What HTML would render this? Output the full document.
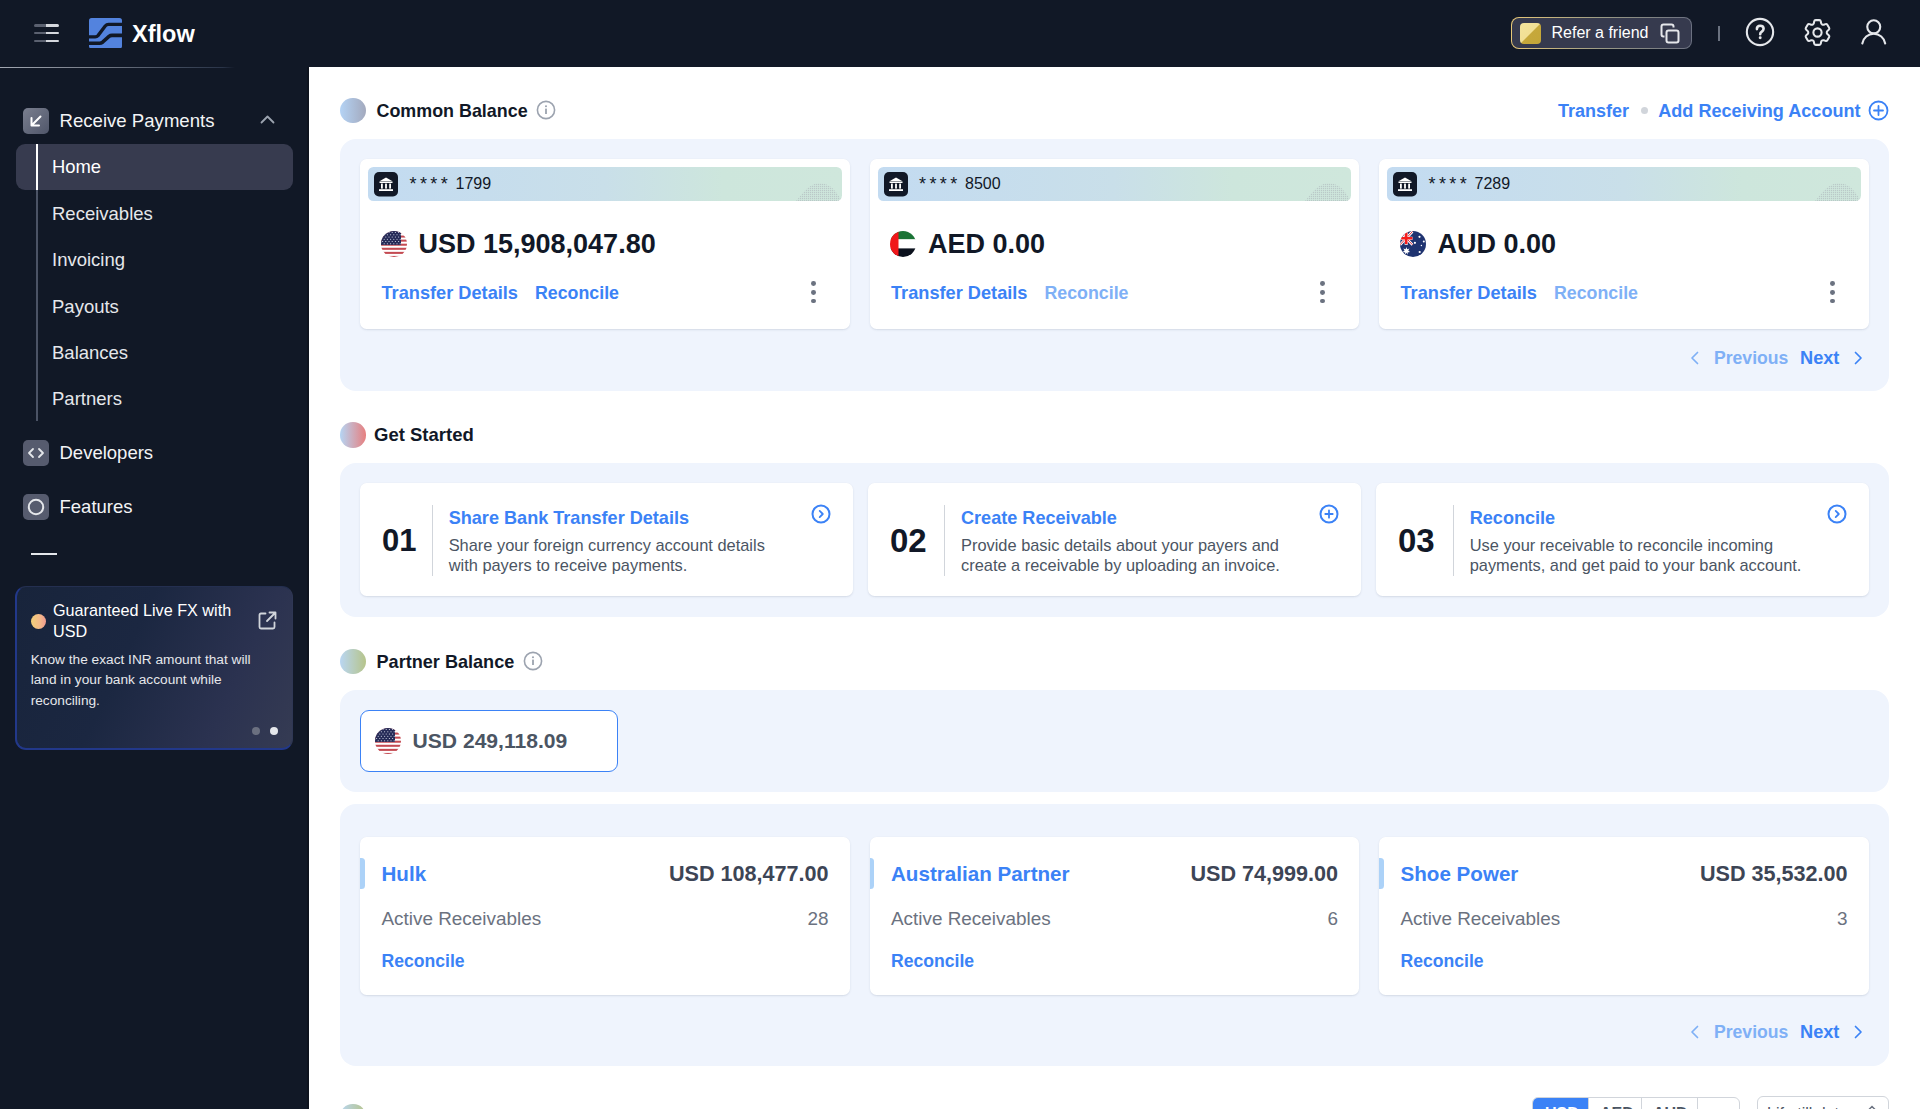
<!DOCTYPE html><html><head><meta charset="utf-8"><style>
html,body{margin:0;padding:0;width:1920px;height:1109px;overflow:hidden;background:#fff;font-family:"Liberation Sans",sans-serif;}
.a{position:absolute;}
.t{position:absolute;line-height:1;white-space:nowrap;}
</style></head><body>
<div class="a" style="left:0px;top:0px;width:1920px;height:67px;background:#111826"></div>
<div class="a" style="left:0px;top:67px;width:309px;height:1042px;background:#111826"></div>
<div class="a" style="left:0px;top:66.6px;width:309px;height:1.2px;background:linear-gradient(90deg,#a3a8b2 0%,#6e7480 35%,#3c4658 60%,#2a3448 72%,rgba(17,24,38,0) 76%)"></div>
<div class="a" style="left:306.8px;top:67px;width:2.2px;height:1042px;background:#0e131e"></div>
<div class="a" style="left:33.5px;top:24.1px;width:25.5px;height:2.5px;border-radius:2px;background:linear-gradient(90deg,#5b6170 0%,#5b6170 48%,#d5d8de 50%,#d5d8de 100%)"></div>
<div class="a" style="left:33.5px;top:31.9px;width:25.5px;height:2.5px;border-radius:2px;background:linear-gradient(90deg,#5b6170 0%,#5b6170 48%,#d5d8de 50%,#d5d8de 100%)"></div>
<div class="a" style="left:33.5px;top:39.6px;width:25.5px;height:2.5px;border-radius:2px;background:linear-gradient(90deg,#5b6170 0%,#5b6170 48%,#d5d8de 50%,#d5d8de 100%)"></div>
<svg class="a" style="left:89.45px;top:17.8px" width="33" height="30.6" viewBox="0 0 33 30.6"><rect x="0" y="0" width="33" height="30.6" rx="2.6" fill="#5383de"/>
<path d="M-1 18.85 L6.2 18.85 C7.4 18.85 8.2 18.5 9 17.6 L16.2 8 C17.2 6.8 18 6.3 19.6 6.3 L34 6.3" stroke="#111826" stroke-width="3.3" fill="none"/>
<path d="M-1 25.2 L10.6 25.2 C11.8 25.2 12.6 24.9 13.6 24.2 L20 18.4 C20.9 17.7 21.6 17.4 23 17.4 L34 17.4" stroke="#111826" stroke-width="3.6" fill="none"/></svg>
<div class="t " style="left:132px;top:22.71px;font-size:23.5px;color:#ffffff;font-weight:700;">Xflow</div>
<div class="a" style="left:1511px;top:17px;width:181px;height:32px;border-radius:8px;padding:1px;box-sizing:border-box;background:linear-gradient(90deg,#e8c877 0%,#9a9a86 50%,#6b7080 100%)"><div style="width:100%;height:100%;border-radius:7px;background:#363a4e"></div></div>
<div class="a" style="left:1520px;top:22.5px;width:21px;height:21px;border-radius:4px;background:linear-gradient(135deg,#f4e49c 0%,#f1df94 49.5%,#c6a83b 50.5%,#c4a638 100%)"></div>
<div class="t " style="left:1551.5px;top:25.46px;font-size:16px;color:#ffffff;font-weight:400;">Refer a friend</div>
<svg class="a" style="left:1660px;top:23px" width="21" height="21" viewBox="0 0 21 21"><rect x="6.5" y="7.5" width="12" height="12" rx="2" fill="none" stroke="#e5e7eb" stroke-width="2"/>
<path d="M13.5 4.5 L13.5 3.5 C13.5 2.4 12.6 1.5 11.5 1.5 L3.5 1.5 C2.4 1.5 1.5 2.4 1.5 3.5 L1.5 11.5 C1.5 12.6 2.4 13.5 3.5 13.5 L4.5 13.5" fill="none" stroke="#e5e7eb" stroke-width="2"/></svg>
<div class="a" style="left:1718px;top:26px;width:1.5px;height:14.5px;background:#6b7280"></div>
<svg class="a" style="left:1744.4px;top:16px" width="32" height="32" viewBox="0 0 32 32"><circle cx="16" cy="16" r="13.15" fill="none" stroke="#e5e7eb" stroke-width="2.1"/>
<path d="M12.9 13.1 C12.9 10.9 14.3 9.8 16.2 9.8 C18.3 9.8 19.6 11.1 19.6 12.8 C19.6 14.4 18.6 15.1 17.5 15.9 C16.6 16.5 16.2 17.1 16.2 18.3" fill="none" stroke="#e5e7eb" stroke-width="2.6" stroke-linecap="round"/>
<circle cx="16.2" cy="21.7" r="1.45" fill="#e5e7eb"/></svg>
<svg class="a" style="left:1800.6px;top:15.7px" width="33" height="33" viewBox="0 0 24 24"><g fill="none" stroke="#e5e7eb" stroke-width="1.5" stroke-linecap="round" stroke-linejoin="round"><path d="M9.594 3.94c.09-.542.56-.94 1.11-.94h2.593c.55 0 1.02.398 1.11.94l.213 1.281c.063.374.313.686.645.87.074.04.147.083.22.127.325.196.72.257 1.075.124l1.217-.456a1.125 1.125 0 0 1 1.37.49l1.296 2.247a1.125 1.125 0 0 1-.26 1.431l-1.003.827c-.293.241-.438.613-.43.992a7.723 7.723 0 0 1 0 .255c-.008.378.137.75.43.991l1.004.827c.424.35.534.955.26 1.43l-1.298 2.247a1.125 1.125 0 0 1-1.369.491l-1.217-.456c-.355-.133-.75-.072-1.076.124a6.47 6.47 0 0 1-.22.128c-.331.183-.581.495-.644.869l-.213 1.281c-.09.543-.56.94-1.11.94h-2.594c-.55 0-1.019-.398-1.11-.94l-.213-1.281c-.062-.374-.312-.686-.644-.87a6.52 6.52 0 0 1-.22-.127c-.325-.196-.72-.257-1.076-.124l-1.217.456a1.125 1.125 0 0 1-1.369-.49l-1.297-2.247a1.125 1.125 0 0 1 .26-1.431l1.004-.827c.292-.24.437-.613.43-.991a6.932 6.932 0 0 1 0-.255c.007-.38-.138-.751-.43-.992l-1.004-.827a1.125 1.125 0 0 1-.26-1.43l1.297-2.247a1.125 1.125 0 0 1 1.37-.491l1.216.456c.356.133.751.072 1.076-.124.072-.044.146-.086.22-.128.332-.183.582-.495.644-.869l.214-1.28Z"/><path d="M15 12a3 3 0 1 1-6 0 3 3 0 0 1 6 0Z"/></g></svg>
<svg class="a" style="left:1859px;top:14px" width="30" height="34" viewBox="0 0 30 34"><circle cx="14.75" cy="12.8" r="6.5" fill="none" stroke="#e5e7eb" stroke-width="2.1"/>
<path d="M3.3 29.5 A11.6 11.6 0 0 1 26.2 29.5" fill="none" stroke="#e5e7eb" stroke-width="2.1" stroke-linecap="round"/></svg>
<div class="a" style="left:23px;top:108px;width:26px;height:26px;border-radius:5px;background:linear-gradient(135deg,#7a7f8f 0%,#50566a 100%)"></div>
<svg class="a" style="left:23px;top:108px" width="26" height="26" viewBox="0 0 26 26"><path d="M17.5 8.5 L8.5 17.5 M8.5 10 L8.5 17.5 L16 17.5" fill="none" stroke="#ffffff" stroke-width="2" stroke-linecap="round" stroke-linejoin="round"/></svg>
<div class="t " style="left:59.5px;top:111.76px;font-size:18.6px;color:#f3f4f6;font-weight:400;">Receive Payments</div>
<svg class="a" style="left:259px;top:113px" width="17" height="12" viewBox="0 0 17 12"><path d="M2.5 9.5 L8.5 3.5 L14.5 9.5" fill="none" stroke="#9ca3af" stroke-width="1.8" stroke-linecap="round" stroke-linejoin="round"/></svg>
<div class="a" style="left:16px;top:144px;width:277px;height:45.5px;background:#373b4f;border-radius:9px"></div>
<div class="a" style="left:35.5px;top:144px;width:2px;height:277px;background:#4b5365"></div>
<div class="a" style="left:35.5px;top:144px;width:2px;height:46px;background:#ffffff"></div>
<div class="t " style="left:52px;top:158.02px;font-size:18.4px;color:#ffffff;font-weight:400;">Home</div>
<div class="t " style="left:52px;top:205.14px;font-size:18.5px;color:#e5e7eb;font-weight:400;">Receivables</div>
<div class="t " style="left:52px;top:251.34px;font-size:18.5px;color:#e5e7eb;font-weight:400;">Invoicing</div>
<div class="t " style="left:52px;top:297.54px;font-size:18.5px;color:#e5e7eb;font-weight:400;">Payouts</div>
<div class="t " style="left:52px;top:343.74px;font-size:18.5px;color:#e5e7eb;font-weight:400;">Balances</div>
<div class="t " style="left:52px;top:389.94px;font-size:18.5px;color:#e5e7eb;font-weight:400;">Partners</div>
<div class="a" style="left:23px;top:440px;width:26px;height:26px;background:#565b6e;border-radius:5px"></div>
<svg class="a" style="left:23px;top:440px" width="26" height="26" viewBox="0 0 26 26"><path d="M10 9 L6 13 L10 17 M16 9 L20 13 L16 17" fill="none" stroke="#e5e7eb" stroke-width="1.8" stroke-linecap="round" stroke-linejoin="round"/></svg>
<div class="t " style="left:59.5px;top:444.04px;font-size:18.5px;color:#f3f4f6;font-weight:400;">Developers</div>
<div class="a" style="left:23px;top:494px;width:26px;height:26px;background:#565b6e;border-radius:5px"></div>
<svg class="a" style="left:23px;top:494px" width="26" height="26" viewBox="0 0 26 26"><circle cx="13" cy="13" r="7.2" fill="none" stroke="#e5e7eb" stroke-width="2"/></svg>
<div class="t " style="left:59.5px;top:498.14px;font-size:18.5px;color:#f3f4f6;font-weight:400;">Features</div>
<div class="a" style="left:31px;top:552.5px;width:26px;height:2px;background:#e5e7eb"></div>
<div class="a" style="left:15px;top:585.5px;width:278px;height:164.5px;box-sizing:border-box;border-radius:11px;border-left:2.4px solid #22388a;border-bottom:2.6px solid #22388a;border-top:1px solid #242f50;border-right:1px solid #2f3754;background:linear-gradient(115deg,#18243b 0%,#1b2741 40%,#2b3250 75%,#353b53 100%)"></div>
<div class="a" style="left:30.5px;top:613.5px;width:15.5px;height:15.5px;border-radius:50%;background:linear-gradient(90deg,#f2d07a 0%,#f4b98a 60%,#ee9a8e 100%)"></div>
<div class="t " style="left:53px;top:602.29px;font-size:16.2px;color:#ffffff;font-weight:400;">Guaranteed Live FX with</div>
<div class="t " style="left:53px;top:622.59px;font-size:16.2px;color:#ffffff;font-weight:400;">USD</div>
<svg class="a" style="left:257px;top:610px" width="21" height="21" viewBox="0 0 21 21"><path d="M8.5 3.5 L4 3.5 C3 3.5 2.5 4 2.5 5 L2.5 17 C2.5 18 3 18.5 4 18.5 L16 18.5 C17 18.5 17.5 18 17.5 17 L17.5 12.5" fill="none" stroke="#d1d5db" stroke-width="1.8" stroke-linecap="round"/>
<path d="M10 11 L18.5 2.5 M12.5 2.5 L18.5 2.5 L18.5 8.5" fill="none" stroke="#d1d5db" stroke-width="1.8" stroke-linecap="round" stroke-linejoin="round"/></svg>
<div class="t " style="left:30.7px;top:652.80px;font-size:13.7px;color:#e5e7eb;font-weight:400;">Know the exact INR amount that will</div>
<div class="t " style="left:30.7px;top:673.30px;font-size:13.7px;color:#e5e7eb;font-weight:400;">land in your bank account while</div>
<div class="t " style="left:30.7px;top:693.80px;font-size:13.7px;color:#e5e7eb;font-weight:400;">reconciling.</div>
<div class="a" style="left:252px;top:726.5px;width:8px;height:8px;background:#6b7080;border-radius:50%"></div>
<div class="a" style="left:270px;top:726.5px;width:8px;height:8px;background:#e5e7eb;border-radius:50%"></div>
<div class="a" style="left:340px;top:97.5px;width:25.5px;height:25.5px;border-radius:50%;background:linear-gradient(90deg,#b4d3f5 0%,#a3a9bd 100%)"></div>
<div class="t " style="left:376.5px;top:102.75px;font-size:17.9px;color:#111827;font-weight:700;">Common Balance</div>
<svg class="a" style="left:536px;top:100.3px" width="20" height="20" viewBox="0 0 20 20"><circle cx="10" cy="10" r="8.6" fill="none" stroke="#9ca3af" stroke-width="1.6"/><rect x="9.1" y="8.6" width="1.8" height="5.4" fill="#9ca3af"/><circle cx="10" cy="6.2" r="1.05" fill="#9ca3af"/></svg>
<div class="t" style="right:291px;top:101.96px;font-size:18px;color:#3b82f6;font-weight:700;">Transfer</div>
<div class="a" style="left:1640.5px;top:106.6px;width:7.8px;height:7.8px;background:#d1d5db;border-radius:50%"></div>
<div class="t" style="right:59.40000000000009px;top:102.18px;font-size:18.1px;color:#3b82f6;font-weight:700;">Add Receiving Account</div>
<svg class="a" style="left:1868px;top:100px" width="21" height="21" viewBox="0 0 21 21"><circle cx="10.5" cy="10.5" r="9" fill="none" stroke="#3b82f6" stroke-width="1.8"/><path d="M10.5 6 V15 M6 10.5 H15" stroke="#3b82f6" stroke-width="1.8" stroke-linecap="round"/></svg>
<div class="a" style="left:340px;top:139px;width:1549px;height:252px;background:#eff4fd;border-radius:16px"></div>
<div class="a" style="left:360px;top:159px;width:489.5px;height:170px;background:#fff;border-radius:6.5px;box-shadow:0 1px 2.5px rgba(30,41,80,0.09),0 0.5px 1px rgba(30,41,80,0.04)"></div>
<div class="a" style="left:368px;top:167px;width:473.5px;height:33.5px;border-radius:5.5px;overflow:hidden;background:linear-gradient(90deg,#c3dbf1 0%,#c9dfe9 50%,#cde6dc 75%,#cfe7dc 100%)"><svg style="position:absolute;right:0;bottom:0" width="46" height="19" viewBox="0 0 46 19"><defs><pattern id="dp360" width="2" height="2" patternUnits="userSpaceOnUse"><rect width="1.2" height="1.2" fill="#a9b0b8"/></pattern></defs><path d="M0 19 C7 11 12 3 21 1.5 C29 0.5 35 4 39 9 C42 12.5 44 16 46 19 Z" fill="url(#dp360)" opacity="0.55"/></svg></div>
<svg class="a" style="left:374px;top:172px" width="24" height="24.5" viewBox="0 0 24 24.5"><rect x="0" y="0" width="24" height="24.5" rx="5" fill="#111827"/><path d="M5.5 9.3 L12 5.5 L18.5 9.3 Z" fill="#fff"/><rect x="5.5" y="9.6" width="13" height="1.4" fill="#fff"/><rect x="7" y="11.6" width="1.8" height="5" fill="#fff"/><rect x="11.1" y="11.6" width="1.8" height="5" fill="#fff"/><rect x="15.2" y="11.6" width="1.8" height="5" fill="#fff"/><rect x="5" y="17.2" width="14" height="1.8" fill="#fff"/></svg>
<div class="t" style="left:409.5px;top:174.7px;font-size:18px;color:#111827;letter-spacing:3.4px">****</div>
<div class="t " style="left:455.5px;top:175.86px;font-size:16px;color:#111827;font-weight:400;">1799</div>
<svg class="a" style="left:381px;top:231px" width="26" height="26" viewBox="0 0 26 26"><defs><clipPath id="cp381231"><circle cx="13" cy="13" r="13"/></clipPath></defs><g clip-path="url(#cp381231)"><rect width="26" height="26" fill="#ffffff"/><rect x="0" y="0.45" width="26" height="2.05" fill="#c44a52"/><rect x="0" y="4.53" width="26" height="2.05" fill="#c44a52"/><rect x="0" y="8.61" width="26" height="2.05" fill="#c44a52"/><rect x="0" y="12.69" width="26" height="2.05" fill="#c44a52"/><rect x="0" y="16.77" width="26" height="2.05" fill="#c44a52"/><rect x="0" y="20.85" width="26" height="2.05" fill="#c44a52"/><rect x="0" y="24.93" width="26" height="2.05" fill="#c44a52"/><rect x="0" y="0" width="20" height="13.9" fill="#262b58"/><circle cx="1.60" cy="1.50" r="0.6" fill="#d5d9e8"/><circle cx="4.80" cy="1.50" r="0.6" fill="#d5d9e8"/><circle cx="8.00" cy="1.50" r="0.6" fill="#d5d9e8"/><circle cx="11.20" cy="1.50" r="0.6" fill="#d5d9e8"/><circle cx="14.40" cy="1.50" r="0.6" fill="#d5d9e8"/><circle cx="17.60" cy="1.50" r="0.6" fill="#d5d9e8"/><circle cx="3.20" cy="3.75" r="0.6" fill="#d5d9e8"/><circle cx="6.40" cy="3.75" r="0.6" fill="#d5d9e8"/><circle cx="9.60" cy="3.75" r="0.6" fill="#d5d9e8"/><circle cx="12.80" cy="3.75" r="0.6" fill="#d5d9e8"/><circle cx="16.00" cy="3.75" r="0.6" fill="#d5d9e8"/><circle cx="19.20" cy="3.75" r="0.6" fill="#d5d9e8"/><circle cx="1.60" cy="6.00" r="0.6" fill="#d5d9e8"/><circle cx="4.80" cy="6.00" r="0.6" fill="#d5d9e8"/><circle cx="8.00" cy="6.00" r="0.6" fill="#d5d9e8"/><circle cx="11.20" cy="6.00" r="0.6" fill="#d5d9e8"/><circle cx="14.40" cy="6.00" r="0.6" fill="#d5d9e8"/><circle cx="17.60" cy="6.00" r="0.6" fill="#d5d9e8"/><circle cx="3.20" cy="8.25" r="0.6" fill="#d5d9e8"/><circle cx="6.40" cy="8.25" r="0.6" fill="#d5d9e8"/><circle cx="9.60" cy="8.25" r="0.6" fill="#d5d9e8"/><circle cx="12.80" cy="8.25" r="0.6" fill="#d5d9e8"/><circle cx="16.00" cy="8.25" r="0.6" fill="#d5d9e8"/><circle cx="19.20" cy="8.25" r="0.6" fill="#d5d9e8"/><circle cx="1.60" cy="10.50" r="0.6" fill="#d5d9e8"/><circle cx="4.80" cy="10.50" r="0.6" fill="#d5d9e8"/><circle cx="8.00" cy="10.50" r="0.6" fill="#d5d9e8"/><circle cx="11.20" cy="10.50" r="0.6" fill="#d5d9e8"/><circle cx="14.40" cy="10.50" r="0.6" fill="#d5d9e8"/><circle cx="17.60" cy="10.50" r="0.6" fill="#d5d9e8"/><circle cx="3.20" cy="12.75" r="0.6" fill="#d5d9e8"/><circle cx="6.40" cy="12.75" r="0.6" fill="#d5d9e8"/><circle cx="9.60" cy="12.75" r="0.6" fill="#d5d9e8"/><circle cx="12.80" cy="12.75" r="0.6" fill="#d5d9e8"/><circle cx="16.00" cy="12.75" r="0.6" fill="#d5d9e8"/><circle cx="19.20" cy="12.75" r="0.6" fill="#d5d9e8"/></g></svg>
<div class="t " style="left:418.5px;top:231.14px;font-size:27px;color:#111827;font-weight:700;">USD 15,908,047.80</div>
<div class="t " style="left:381.5px;top:283.99px;font-size:18.2px;color:#3b82f6;font-weight:700;">Transfer Details</div>
<div class="t " style="left:535px;top:285.23px;font-size:17.8px;color:#3b82f6;font-weight:700;">Reconcile</div>
<div class="a" style="left:810.9px;top:281.3px;width:4.8px;height:4.8px;border-radius:50%;background:#6b7280"></div>
<div class="a" style="left:810.9px;top:290.0px;width:4.8px;height:4.8px;border-radius:50%;background:#6b7280"></div>
<div class="a" style="left:810.9px;top:298.7px;width:4.8px;height:4.8px;border-radius:50%;background:#6b7280"></div>
<div class="a" style="left:869.5px;top:159px;width:489.5px;height:170px;background:#fff;border-radius:6.5px;box-shadow:0 1px 2.5px rgba(30,41,80,0.09),0 0.5px 1px rgba(30,41,80,0.04)"></div>
<div class="a" style="left:877.5px;top:167px;width:473.5px;height:33.5px;border-radius:5.5px;overflow:hidden;background:linear-gradient(90deg,#c3dbf1 0%,#c9dfe9 50%,#cde6dc 75%,#cfe7dc 100%)"><svg style="position:absolute;right:0;bottom:0" width="46" height="19" viewBox="0 0 46 19"><defs><pattern id="dp869" width="2" height="2" patternUnits="userSpaceOnUse"><rect width="1.2" height="1.2" fill="#a9b0b8"/></pattern></defs><path d="M0 19 C7 11 12 3 21 1.5 C29 0.5 35 4 39 9 C42 12.5 44 16 46 19 Z" fill="url(#dp869)" opacity="0.55"/></svg></div>
<svg class="a" style="left:883.5px;top:172px" width="24" height="24.5" viewBox="0 0 24 24.5"><rect x="0" y="0" width="24" height="24.5" rx="5" fill="#111827"/><path d="M5.5 9.3 L12 5.5 L18.5 9.3 Z" fill="#fff"/><rect x="5.5" y="9.6" width="13" height="1.4" fill="#fff"/><rect x="7" y="11.6" width="1.8" height="5" fill="#fff"/><rect x="11.1" y="11.6" width="1.8" height="5" fill="#fff"/><rect x="15.2" y="11.6" width="1.8" height="5" fill="#fff"/><rect x="5" y="17.2" width="14" height="1.8" fill="#fff"/></svg>
<div class="t" style="left:919.0px;top:174.7px;font-size:18px;color:#111827;letter-spacing:3.4px">****</div>
<div class="t " style="left:965.0px;top:175.86px;font-size:16px;color:#111827;font-weight:400;">8500</div>
<svg class="a" style="left:890px;top:231px" width="26" height="26" viewBox="0 0 26 26"><defs><clipPath id="ae890"><circle cx="13" cy="13" r="13"/></clipPath></defs><g clip-path="url(#ae890)"><rect x="0" y="0" width="26" height="8.4" fill="#1a7335"/><rect x="0" y="8.4" width="26" height="9.0" fill="#ffffff"/><rect x="0" y="17.4" width="26" height="8.6" fill="#0b111d"/><rect x="0" y="0" width="8.5" height="26" fill="#f0171a"/></g></svg>
<div class="t " style="left:928.0px;top:231.14px;font-size:27px;color:#111827;font-weight:700;">AED 0.00</div>
<div class="t " style="left:891.0px;top:283.99px;font-size:18.2px;color:#3b82f6;font-weight:700;">Transfer Details</div>
<div class="t " style="left:1044.5px;top:285.23px;font-size:17.8px;color:#7fb0f6;font-weight:700;">Reconcile</div>
<div class="a" style="left:1320.3999999999999px;top:281.3px;width:4.8px;height:4.8px;border-radius:50%;background:#6b7280"></div>
<div class="a" style="left:1320.3999999999999px;top:290.0px;width:4.8px;height:4.8px;border-radius:50%;background:#6b7280"></div>
<div class="a" style="left:1320.3999999999999px;top:298.7px;width:4.8px;height:4.8px;border-radius:50%;background:#6b7280"></div>
<div class="a" style="left:1379px;top:159px;width:489.5px;height:170px;background:#fff;border-radius:6.5px;box-shadow:0 1px 2.5px rgba(30,41,80,0.09),0 0.5px 1px rgba(30,41,80,0.04)"></div>
<div class="a" style="left:1387px;top:167px;width:473.5px;height:33.5px;border-radius:5.5px;overflow:hidden;background:linear-gradient(90deg,#c3dbf1 0%,#c9dfe9 50%,#cde6dc 75%,#cfe7dc 100%)"><svg style="position:absolute;right:0;bottom:0" width="46" height="19" viewBox="0 0 46 19"><defs><pattern id="dp1379" width="2" height="2" patternUnits="userSpaceOnUse"><rect width="1.2" height="1.2" fill="#a9b0b8"/></pattern></defs><path d="M0 19 C7 11 12 3 21 1.5 C29 0.5 35 4 39 9 C42 12.5 44 16 46 19 Z" fill="url(#dp1379)" opacity="0.55"/></svg></div>
<svg class="a" style="left:1393px;top:172px" width="24" height="24.5" viewBox="0 0 24 24.5"><rect x="0" y="0" width="24" height="24.5" rx="5" fill="#111827"/><path d="M5.5 9.3 L12 5.5 L18.5 9.3 Z" fill="#fff"/><rect x="5.5" y="9.6" width="13" height="1.4" fill="#fff"/><rect x="7" y="11.6" width="1.8" height="5" fill="#fff"/><rect x="11.1" y="11.6" width="1.8" height="5" fill="#fff"/><rect x="15.2" y="11.6" width="1.8" height="5" fill="#fff"/><rect x="5" y="17.2" width="14" height="1.8" fill="#fff"/></svg>
<div class="t" style="left:1428.5px;top:174.7px;font-size:18px;color:#111827;letter-spacing:3.4px">****</div>
<div class="t " style="left:1474.5px;top:175.86px;font-size:16px;color:#111827;font-weight:400;">7289</div>
<svg class="a" style="left:1400px;top:231px" width="26" height="26" viewBox="0 0 26 26"><defs><clipPath id="au1400"><circle cx="13" cy="13" r="13"/></clipPath></defs><g clip-path="url(#au1400)"><rect x="0" y="0" width="26" height="26" fill="#1f3370"/>
<path d="M0 0.5 L12.5 13.8 M12.5 0.5 L0 13.8" stroke="#fff" stroke-width="2.6"/><path d="M0 0.5 L12.5 13.8 M12.5 0.5 L0 13.8" stroke="#d9343f" stroke-width="1"/>
<rect x="4.6" y="0" width="3.2" height="13.8" fill="#fff"/><rect x="0" y="5.7" width="12.5" height="3.2" fill="#fff"/>
<rect x="4.9" y="0" width="2.6" height="13.1" fill="#f51c1c"/><rect x="0" y="6.0" width="12.4" height="2.5" fill="#f51c1c"/>
<path d="M6.4 16 L7.2 18.3 L9.5 17.6 L8.2 19.6 L10 21.1 L7.6 21.4 L7.7 23.8 L6.4 21.8 L5.1 23.8 L5.2 21.4 L2.8 21.1 L4.6 19.6 L3.3 17.6 L5.6 18.3 Z" fill="#fff"/>
<circle cx="19.5" cy="5.8" r="1.1" fill="#fff"/><circle cx="23.8" cy="10.4" r="1" fill="#fff"/><circle cx="14.9" cy="11.8" r="1.1" fill="#fff"/><circle cx="21.4" cy="14.5" r="0.7" fill="#fff"/><circle cx="19.7" cy="21" r="1.1" fill="#fff"/></g></svg>
<div class="t " style="left:1437.5px;top:231.14px;font-size:27px;color:#111827;font-weight:700;">AUD 0.00</div>
<div class="t " style="left:1400.5px;top:283.99px;font-size:18.2px;color:#3b82f6;font-weight:700;">Transfer Details</div>
<div class="t " style="left:1554px;top:285.23px;font-size:17.8px;color:#7fb0f6;font-weight:700;">Reconcile</div>
<div class="a" style="left:1829.8999999999999px;top:281.3px;width:4.8px;height:4.8px;border-radius:50%;background:#6b7280"></div>
<div class="a" style="left:1829.8999999999999px;top:290.0px;width:4.8px;height:4.8px;border-radius:50%;background:#6b7280"></div>
<div class="a" style="left:1829.8999999999999px;top:298.7px;width:4.8px;height:4.8px;border-radius:50%;background:#6b7280"></div>
<svg class="a" style="left:1689px;top:350.9px" width="12" height="14" viewBox="0 0 12 14"><path d="M8.5 1.5 L3 7 L8.5 12.5" fill="none" stroke="#7fb0f6" stroke-width="1.7" stroke-linecap="round" stroke-linejoin="round"/></svg>
<div class="t " style="left:1714px;top:349.90px;font-size:17.6px;color:#7fb0f6;font-weight:700;">Previous</div>
<div class="t " style="left:1800px;top:349.39px;font-size:18.2px;color:#3b82f6;font-weight:700;">Next</div>
<svg class="a" style="left:1852px;top:350.9px" width="12" height="14" viewBox="0 0 12 14"><path d="M3.5 1.5 L9 7 L3.5 12.5" fill="none" stroke="#3b82f6" stroke-width="1.7" stroke-linecap="round" stroke-linejoin="round"/></svg>
<div class="a" style="left:340px;top:422px;width:25.5px;height:25.5px;border-radius:50%;background:linear-gradient(90deg,#b5d5f4 0%,#e77f7f 100%)"></div>
<div class="t " style="left:374px;top:426.44px;font-size:18.5px;color:#111827;font-weight:700;">Get Started</div>
<div class="a" style="left:340px;top:463px;width:1549px;height:154px;background:#eff4fd;border-radius:16px"></div>
<div class="a" style="left:360px;top:482.8px;width:492.5px;height:113.7px;background:#fff;border-radius:6.5px;box-shadow:0 1px 2.5px rgba(30,41,80,0.09),0 0.5px 1px rgba(30,41,80,0.04)"></div>
<div class="t " style="left:382px;top:525.26px;font-size:31px;color:#111827;font-weight:700;">01</div>
<div class="a" style="left:431.75px;top:504.5px;width:1.5px;height:71px;background:#d1d5db"></div>
<div class="t " style="left:448.7px;top:508.58px;font-size:18.1px;color:#3b82f6;font-weight:700;">Share Bank Transfer Details</div>
<div class="t " style="left:448.7px;top:537.12px;font-size:16.4px;color:#4b5563;font-weight:400;">Share your foreign currency account details</div>
<div class="t " style="left:448.7px;top:556.92px;font-size:16.4px;color:#4b5563;font-weight:400;">with payers to receive payments.</div>
<svg class="a" style="left:810.9px;top:504.20000000000005px" width="20" height="20" viewBox="0 0 20 20"><circle cx="10" cy="10" r="8.5" fill="none" stroke="#3b82f6" stroke-width="2"/><path d="M8.7 6.9 L11.8 10 L8.7 13.1" fill="none" stroke="#3b82f6" stroke-width="1.8" stroke-linecap="round" stroke-linejoin="round"/></svg>
<div class="a" style="left:868px;top:482.8px;width:492.5px;height:113.7px;background:#fff;border-radius:6.5px;box-shadow:0 1px 2.5px rgba(30,41,80,0.09),0 0.5px 1px rgba(30,41,80,0.04)"></div>
<div class="t " style="left:890px;top:523.57px;font-size:33px;color:#111827;font-weight:700;">02</div>
<div class="a" style="left:943.75px;top:504.5px;width:1.5px;height:71px;background:#d1d5db"></div>
<div class="t " style="left:961px;top:508.58px;font-size:18.1px;color:#3b82f6;font-weight:700;">Create Receivable</div>
<div class="t " style="left:961px;top:537.12px;font-size:16.4px;color:#4b5563;font-weight:400;">Provide basic details about your payers and</div>
<div class="t " style="left:961px;top:556.92px;font-size:16.4px;color:#4b5563;font-weight:400;">create a receivable by uploading an invoice.</div>
<svg class="a" style="left:1319.4px;top:504.20000000000005px" width="20" height="20" viewBox="0 0 20 20"><circle cx="10" cy="10" r="8.5" fill="none" stroke="#3b82f6" stroke-width="2"/><path d="M10 6.3 V13.7 M6.3 10 H13.7" stroke="#3b82f6" stroke-width="1.8" stroke-linecap="round"/></svg>
<div class="a" style="left:1376px;top:482.8px;width:492.5px;height:113.7px;background:#fff;border-radius:6.5px;box-shadow:0 1px 2.5px rgba(30,41,80,0.09),0 0.5px 1px rgba(30,41,80,0.04)"></div>
<div class="t " style="left:1398px;top:523.57px;font-size:33px;color:#111827;font-weight:700;">03</div>
<div class="a" style="left:1452.65px;top:504.5px;width:1.5px;height:71px;background:#d1d5db"></div>
<div class="t " style="left:1469.7px;top:508.58px;font-size:18.1px;color:#3b82f6;font-weight:700;">Reconcile</div>
<div class="t " style="left:1469.7px;top:537.12px;font-size:16.4px;color:#4b5563;font-weight:400;">Use your receivable to reconcile incoming</div>
<div class="t " style="left:1469.7px;top:556.92px;font-size:16.4px;color:#4b5563;font-weight:400;">payments, and get paid to your bank account.</div>
<svg class="a" style="left:1826.9px;top:504.20000000000005px" width="20" height="20" viewBox="0 0 20 20"><circle cx="10" cy="10" r="8.5" fill="none" stroke="#3b82f6" stroke-width="2"/><path d="M8.7 6.9 L11.8 10 L8.7 13.1" fill="none" stroke="#3b82f6" stroke-width="1.8" stroke-linecap="round" stroke-linejoin="round"/></svg>
<div class="a" style="left:340px;top:648.5px;width:25.5px;height:25.5px;border-radius:50%;background:linear-gradient(90deg,#b9d6f2 0%,#b6c48a 100%)"></div>
<div class="t " style="left:376.5px;top:652.68px;font-size:18.1px;color:#111827;font-weight:700;">Partner Balance</div>
<svg class="a" style="left:522.7px;top:651.3px" width="20" height="20" viewBox="0 0 20 20"><circle cx="10" cy="10" r="8.6" fill="none" stroke="#9ca3af" stroke-width="1.6"/><rect x="9.1" y="8.6" width="1.8" height="5.4" fill="#9ca3af"/><circle cx="10" cy="6.2" r="1.05" fill="#9ca3af"/></svg>
<div class="a" style="left:340px;top:690px;width:1549px;height:102px;background:#eff4fd;border-radius:16px"></div>
<div class="a" style="left:360.3px;top:710.3px;width:257.3px;height:61.3px;box-sizing:border-box;border:1.6px solid #3b82f6;border-radius:9px;background:#fff"></div>
<svg class="a" style="left:375px;top:728px" width="26" height="26" viewBox="0 0 26 26"><defs><clipPath id="cp375728"><circle cx="13" cy="13" r="13"/></clipPath></defs><g clip-path="url(#cp375728)"><rect width="26" height="26" fill="#ffffff"/><rect x="0" y="0.45" width="26" height="2.05" fill="#c44a52"/><rect x="0" y="4.53" width="26" height="2.05" fill="#c44a52"/><rect x="0" y="8.61" width="26" height="2.05" fill="#c44a52"/><rect x="0" y="12.69" width="26" height="2.05" fill="#c44a52"/><rect x="0" y="16.77" width="26" height="2.05" fill="#c44a52"/><rect x="0" y="20.85" width="26" height="2.05" fill="#c44a52"/><rect x="0" y="24.93" width="26" height="2.05" fill="#c44a52"/><rect x="0" y="0" width="20" height="13.9" fill="#262b58"/><circle cx="1.60" cy="1.50" r="0.6" fill="#d5d9e8"/><circle cx="4.80" cy="1.50" r="0.6" fill="#d5d9e8"/><circle cx="8.00" cy="1.50" r="0.6" fill="#d5d9e8"/><circle cx="11.20" cy="1.50" r="0.6" fill="#d5d9e8"/><circle cx="14.40" cy="1.50" r="0.6" fill="#d5d9e8"/><circle cx="17.60" cy="1.50" r="0.6" fill="#d5d9e8"/><circle cx="3.20" cy="3.75" r="0.6" fill="#d5d9e8"/><circle cx="6.40" cy="3.75" r="0.6" fill="#d5d9e8"/><circle cx="9.60" cy="3.75" r="0.6" fill="#d5d9e8"/><circle cx="12.80" cy="3.75" r="0.6" fill="#d5d9e8"/><circle cx="16.00" cy="3.75" r="0.6" fill="#d5d9e8"/><circle cx="19.20" cy="3.75" r="0.6" fill="#d5d9e8"/><circle cx="1.60" cy="6.00" r="0.6" fill="#d5d9e8"/><circle cx="4.80" cy="6.00" r="0.6" fill="#d5d9e8"/><circle cx="8.00" cy="6.00" r="0.6" fill="#d5d9e8"/><circle cx="11.20" cy="6.00" r="0.6" fill="#d5d9e8"/><circle cx="14.40" cy="6.00" r="0.6" fill="#d5d9e8"/><circle cx="17.60" cy="6.00" r="0.6" fill="#d5d9e8"/><circle cx="3.20" cy="8.25" r="0.6" fill="#d5d9e8"/><circle cx="6.40" cy="8.25" r="0.6" fill="#d5d9e8"/><circle cx="9.60" cy="8.25" r="0.6" fill="#d5d9e8"/><circle cx="12.80" cy="8.25" r="0.6" fill="#d5d9e8"/><circle cx="16.00" cy="8.25" r="0.6" fill="#d5d9e8"/><circle cx="19.20" cy="8.25" r="0.6" fill="#d5d9e8"/><circle cx="1.60" cy="10.50" r="0.6" fill="#d5d9e8"/><circle cx="4.80" cy="10.50" r="0.6" fill="#d5d9e8"/><circle cx="8.00" cy="10.50" r="0.6" fill="#d5d9e8"/><circle cx="11.20" cy="10.50" r="0.6" fill="#d5d9e8"/><circle cx="14.40" cy="10.50" r="0.6" fill="#d5d9e8"/><circle cx="17.60" cy="10.50" r="0.6" fill="#d5d9e8"/><circle cx="3.20" cy="12.75" r="0.6" fill="#d5d9e8"/><circle cx="6.40" cy="12.75" r="0.6" fill="#d5d9e8"/><circle cx="9.60" cy="12.75" r="0.6" fill="#d5d9e8"/><circle cx="12.80" cy="12.75" r="0.6" fill="#d5d9e8"/><circle cx="16.00" cy="12.75" r="0.6" fill="#d5d9e8"/><circle cx="19.20" cy="12.75" r="0.6" fill="#d5d9e8"/></g></svg>
<div class="t " style="left:412.5px;top:730.34px;font-size:21.1px;color:#4b5563;font-weight:700;">USD 249,118.09</div>
<div class="a" style="left:340px;top:803.5px;width:1549px;height:262px;background:#eff4fd;border-radius:16px"></div>
<div class="a" style="left:360px;top:837.2px;width:489.5px;height:157.6px;background:#fff;border-radius:6.5px;box-shadow:0 1px 2.5px rgba(30,41,80,0.09),0 0.5px 1px rgba(30,41,80,0.04)"></div>
<div class="a" style="left:360px;top:858px;width:4.8px;height:30.5px;background:#acd2f8;border-radius:0 3.5px 3.5px 0"></div>
<div class="t " style="left:381.5px;top:864.16px;font-size:20.6px;color:#3b82f6;font-weight:700;">Hulk</div>
<div class="t" style="right:1091.4px;top:862.72px;font-size:21.6px;color:#3d4555;font-weight:700;">USD 108,477.00</div>
<div class="t " style="left:381.5px;top:909.80px;font-size:18.9px;color:#6b7280;font-weight:400;">Active Receivables</div>
<div class="t" style="right:1091.4px;top:909.80px;font-size:18.9px;color:#6b7280;font-weight:400;">28</div>
<div class="t " style="left:381.5px;top:952.50px;font-size:17.6px;color:#3b82f6;font-weight:700;">Reconcile</div>
<div class="a" style="left:869.5px;top:837.2px;width:489.5px;height:157.6px;background:#fff;border-radius:6.5px;box-shadow:0 1px 2.5px rgba(30,41,80,0.09),0 0.5px 1px rgba(30,41,80,0.04)"></div>
<div class="a" style="left:869.5px;top:858px;width:4.8px;height:30.5px;background:#acd2f8;border-radius:0 3.5px 3.5px 0"></div>
<div class="t " style="left:891.0px;top:864.16px;font-size:20.6px;color:#3b82f6;font-weight:700;">Australian Partner</div>
<div class="t" style="right:581.9000000000001px;top:862.72px;font-size:21.6px;color:#3d4555;font-weight:700;">USD 74,999.00</div>
<div class="t " style="left:891.0px;top:909.80px;font-size:18.9px;color:#6b7280;font-weight:400;">Active Receivables</div>
<div class="t" style="right:581.9000000000001px;top:909.80px;font-size:18.9px;color:#6b7280;font-weight:400;">6</div>
<div class="t " style="left:891.0px;top:952.50px;font-size:17.6px;color:#3b82f6;font-weight:700;">Reconcile</div>
<div class="a" style="left:1379px;top:837.2px;width:489.5px;height:157.6px;background:#fff;border-radius:6.5px;box-shadow:0 1px 2.5px rgba(30,41,80,0.09),0 0.5px 1px rgba(30,41,80,0.04)"></div>
<div class="a" style="left:1379px;top:858px;width:4.8px;height:30.5px;background:#acd2f8;border-radius:0 3.5px 3.5px 0"></div>
<div class="t " style="left:1400.5px;top:864.16px;font-size:20.6px;color:#3b82f6;font-weight:700;">Shoe Power</div>
<div class="t" style="right:72.40000000000009px;top:862.72px;font-size:21.6px;color:#3d4555;font-weight:700;">USD 35,532.00</div>
<div class="t " style="left:1400.5px;top:909.80px;font-size:18.9px;color:#6b7280;font-weight:400;">Active Receivables</div>
<div class="t" style="right:72.40000000000009px;top:909.80px;font-size:18.9px;color:#6b7280;font-weight:400;">3</div>
<div class="t " style="left:1400.5px;top:952.50px;font-size:17.6px;color:#3b82f6;font-weight:700;">Reconcile</div>
<svg class="a" style="left:1689px;top:1024.8px" width="12" height="14" viewBox="0 0 12 14"><path d="M8.5 1.5 L3 7 L8.5 12.5" fill="none" stroke="#7fb0f6" stroke-width="1.7" stroke-linecap="round" stroke-linejoin="round"/></svg>
<div class="t " style="left:1714px;top:1023.80px;font-size:17.6px;color:#7fb0f6;font-weight:700;">Previous</div>
<div class="t " style="left:1800px;top:1023.29px;font-size:18.2px;color:#3b82f6;font-weight:700;">Next</div>
<svg class="a" style="left:1852px;top:1024.8px" width="12" height="14" viewBox="0 0 12 14"><path d="M3.5 1.5 L9 7 L3.5 12.5" fill="none" stroke="#3b82f6" stroke-width="1.7" stroke-linecap="round" stroke-linejoin="round"/></svg>
<div class="a" style="left:340px;top:1103.5px;width:25.5px;height:25.5px;border-radius:50%;background:linear-gradient(90deg,#b9d6f2 0%,#b6c48a 100%)"></div>
<div class="a" style="left:1532.3px;top:1096.5px;width:207.5px;height:40px;box-sizing:border-box;border:1px solid #d1d5db;border-radius:6px;overflow:hidden;background:#fff"><div style="position:absolute;left:0;top:0;width:54.6px;height:40px;background:#3b82f6"></div><div style="position:absolute;left:54.6px;top:0;width:1px;height:40px;background:#d1d5db"></div><div style="position:absolute;left:107.9px;top:0;width:1px;height:40px;background:#d1d5db"></div><div style="position:absolute;left:164px;top:0;width:1px;height:40px;background:#d1d5db"></div></div>
<div class="t " style="left:1545px;top:1106.46px;font-size:16px;color:#ffffff;font-weight:700;">USD</div>
<div class="t " style="left:1600px;top:1106.46px;font-size:16px;color:#4b5563;font-weight:700;">AED</div>
<div class="t " style="left:1653px;top:1106.46px;font-size:16px;color:#4b5563;font-weight:700;">AUD</div>
<div class="a" style="left:1756.5px;top:1095.8px;width:132px;height:40px;box-sizing:border-box;border:1px solid #d1d5db;border-radius:6px;background:#fff"></div>
<div class="t " style="left:1767px;top:1106.46px;font-size:16px;color:#4b5563;font-weight:400;">Life till date</div>
<svg class="a" style="left:1866px;top:1103px" width="12" height="9" viewBox="0 0 12 9"><path d="M2.5 7 L6 3.5 L9.5 7" fill="none" stroke="#6b7280" stroke-width="1.5" stroke-linecap="round"/></svg>
</body></html>
